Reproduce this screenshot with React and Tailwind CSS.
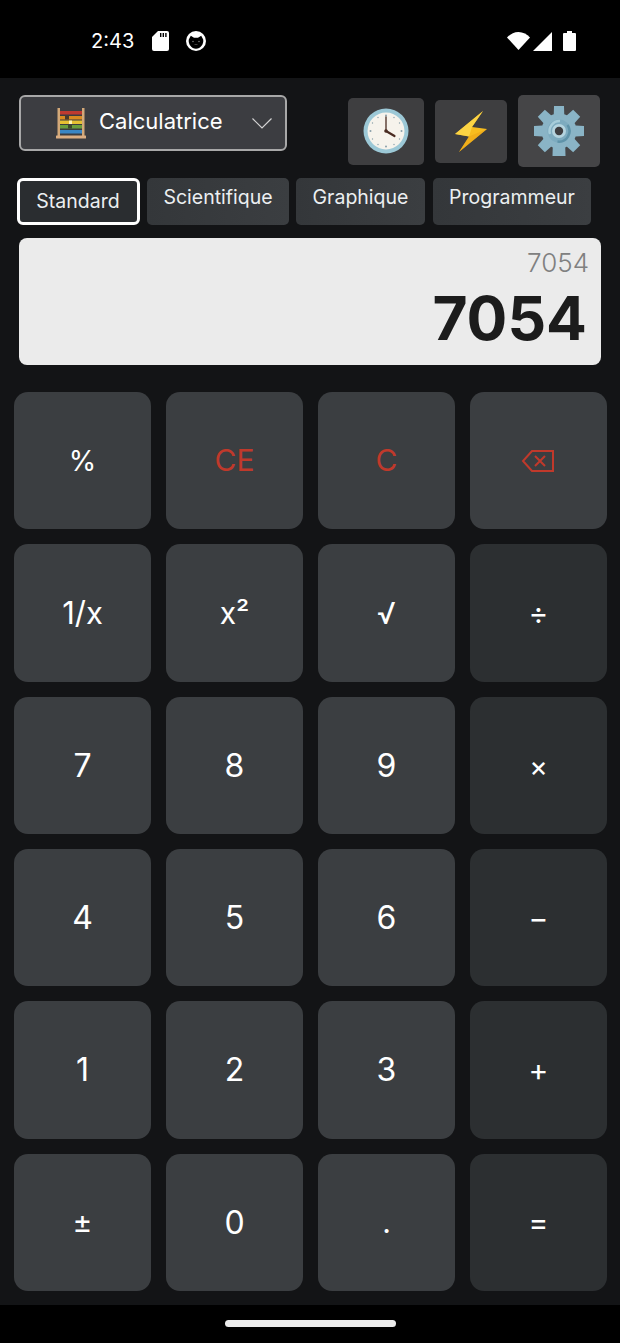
import React from 'react';

const SdIcon = () => (
  <svg width="17" height="20" viewBox="0 0 17 20">
    <path fill="#fff" d="M6 0h9a2 2 0 0 1 2 2v16a2 2 0 0 1-2 2H2a2 2 0 0 1-2-2V6z" />
    <path fill="#000" d="M8 2h1.400v4H8zM10.600 2H12v4h-1.400zM13.200 2h1.400v4h-1.400z" />
  </svg>
);

const CatIcon = () => (
  <svg width="20" height="20" viewBox="0 0 20 20">
    <circle cx="10" cy="10" r="10" fill="#fff" />
    <path fill="#000" d="M2.800 8.500L4.800 4.800 8 6.800h4l3.200-2 2 3.700C18 13 14.500 17.800 10 17.800S2 13 2.800 8.500z" />
    <circle cx="7" cy="10.500" r="0.800" fill="#777" />
    <circle cx="13" cy="10.500" r="0.800" fill="#777" />
    <path d="M8.500 13.500h3" stroke="#666" strokeWidth="0.600" />
  </svg>
);

const WifiIcon = () => (
  <svg width="23" height="18" viewBox="0 0 23 18">
    <path fill="#fff" d="M0 5.500C3 2.200 7 0 11.500 0S20 2.200 23 5.500L11.500 18z" />
  </svg>
);

const SignalIcon = () => (
  <svg width="20" height="19" viewBox="0 0 20 19">
    <path fill="#fff" d="M19 0v19H0z" />
  </svg>
);

const BatteryIcon = () => (
  <svg width="13" height="20" viewBox="0 0 13 20">
    <path fill="#fff" d="M4 0h5v2h3a1 1 0 0 1 1 1v16a1 1 0 0 1-1 1H1a1 1 0 0 1-1-1V3a1 1 0 0 1 1-1h3z" />
  </svg>
);

const AbacusIcon = () => (
  <svg width="30" height="31" viewBox="0 0 30 31">
    <rect x="1.500" y="0" width="2.500" height="28" fill="#d2a878" />
    <rect x="26" y="0" width="2.500" height="28" fill="#d2a878" />
    <rect x="4" y="3" width="22" height="3.500" fill="#bf3a30" />
    <rect x="4" y="8" width="22" height="3.500" fill="#d98a20" />
    <rect x="4" y="12.500" width="22" height="3.500" fill="#e6c032" />
    <rect x="4" y="17" width="22" height="3.500" fill="#6a9e3c" />
    <rect x="4" y="22" width="22" height="3.500" fill="#3a86c4" />
    <rect x="9" y="8" width="4" height="3.500" fill="#4a3a2a" />
    <rect x="13" y="12.500" width="3" height="3.500" fill="#fff3b0" />
    <rect x="12" y="17" width="4" height="3.500" fill="#3d4a2a" />
    <rect x="0" y="27.500" width="30" height="3" rx="0.500" fill="#dcae82" />
  </svg>
);

const ClockIcon = () => (
  <svg width="46" height="46" viewBox="0 0 46 46">
    <circle cx="23" cy="23" r="22.500" fill="#9cc8d6" />
    <circle cx="23" cy="23" r="18.500" fill="#f6f3ec" />
    <g fill="#8aa0aa">
      <circle cx="23" cy="7.500" r="1" />
      <circle cx="23" cy="38.500" r="1" />
      <circle cx="7.500" cy="23" r="1" />
      <circle cx="38.500" cy="23" r="1" />
      <circle cx="31" cy="9.500" r="0.700" />
      <circle cx="36.500" cy="15" r="0.700" />
      <circle cx="36.500" cy="31" r="0.700" />
      <circle cx="31" cy="36.500" r="0.700" />
      <circle cx="15" cy="36.500" r="0.700" />
      <circle cx="9.500" cy="31" r="0.700" />
      <circle cx="9.500" cy="15" r="0.700" />
      <circle cx="15" cy="9.500" r="0.700" />
    </g>
    <path d="M23 23V9" stroke="#4a2c22" strokeWidth="1.300" strokeLinecap="round" />
    <path d="M23 23l8.500 5" stroke="#4a2c22" strokeWidth="2.200" strokeLinecap="round" />
    <circle cx="23" cy="23" r="1.800" fill="#4a2c22" />
  </svg>
);

const BoltIcon = () => (
  <svg width="32" height="41" viewBox="0 0 32 41">
    <path fill="#f7bc1e" d="M28 0L0 23l14 2.500L4 41l28-23-15-2z" />
    <path fill="#fdd94e" d="M28 0L0 23l14 2.500 3-9.500z" opacity="0.800" />
    <path fill="#e9a016" d="M32 18L4 41l10-15.500z" opacity="0.500" />
  </svg>
);

const GearIcon = () => (
  <svg width="50" height="50" viewBox="0 0 50 50">
    <g fill="#8ab4c6">
      <path d="M20 0h10l1.500 50h-13z" />
      <path d="M20 0h10l1.500 25h-13z" transform="rotate(45 25 25)" />
      <path d="M20 0h10l1.500 25h-13z" transform="rotate(90 25 25)" />
      <path d="M20 0h10l1.500 25h-13z" transform="rotate(135 25 25)" />
      <path d="M20 0h10l1.500 25h-13z" transform="rotate(225 25 25)" />
      <path d="M20 0h10l1.500 25h-13z" transform="rotate(270 25 25)" />
      <path d="M20 0h10l1.500 25h-13z" transform="rotate(315 25 25)" />
    </g>
    <circle cx="25" cy="25" r="17.500" fill="#8ab4c6" />
    <circle cx="25" cy="25" r="11.500" fill="#7dabbf" />
    <path d="M33.500 19a10.500 10.500 0 0 1-10 16.500" fill="none" stroke="#5f93a9" strokeWidth="2.500" />
    <path d="M16 28a10 10 0 0 1 10-13" fill="none" stroke="#a7cdda" strokeWidth="2.500" />
    <circle cx="25" cy="25" r="7" fill="#b5d4df" />
    <circle cx="25" cy="25" r="4.200" fill="#3f3f42" />
  </svg>
);

const ChevronIcon = () => (
  <svg width="20" height="11" viewBox="0 0 20 11" fill="none" stroke="#d4d4d4" strokeWidth="1.200">
    <path d="M0.500 0.500L10 10 19.500 0.500" />
  </svg>
);

const BackspaceIcon = () => (
  <svg width="34" height="24" viewBox="0 0 34 24" fill="none" stroke="#c0392b" strokeWidth="2">
    <path d="M32 2v20H11L2 12l9-10z" />
    <path d="M14 7l10 10M24 7L14 17" />
  </svg>
);

const tabs = [
  { label: 'Scientifique', w: 'w-[142px]' },
  { label: 'Graphique', w: 'w-[129px]' },
  { label: 'Programmeur', w: 'w-[158px] ml-px' },
];

const keys = [
  { label: '%', size: 'text-[28px] pb-px' },
  { label: 'CE', size: 'text-[30px] pb-px', red: true },
  { label: 'C', size: 'text-[30px] pb-px', red: true },
  { icon: <BackspaceIcon />, size: 'pr-[2px] pb-px' },
  { label: '1/x', size: 'text-[31px]' },
  { label: 'x²', size: 'text-[30px]' },
  { label: '√', size: 'text-[30px]' },
  { label: '÷', size: 'text-[30px]', op: true },
  { label: '7', size: 'text-[32px]' },
  { label: '8', size: 'text-[32px]' },
  { label: '9', size: 'text-[32px]' },
  { label: '×', size: 'text-[28px]', op: true },
  { label: '4', size: 'text-[32px]' },
  { label: '5', size: 'text-[32px]' },
  { label: '6', size: 'text-[32px]' },
  { label: '−', size: 'text-[30px]', op: true },
  { label: '1', size: 'text-[32px]' },
  { label: '2', size: 'text-[32px]' },
  { label: '3', size: 'text-[32px]' },
  { label: '+', size: 'text-[30px]', op: true },
  { label: '±', size: 'text-[30px]' },
  { label: '0', size: 'text-[32px]' },
  { label: '.', size: 'text-[30px]' },
  { label: '=', size: 'text-[30px]', op: true },
];

export default function App() {
  return (
    <div className="w-[620px] h-[1343px] flex flex-col bg-[#131416] text-white font-['Inter',sans-serif] overflow-hidden">
      {/* Status bar */}
      <div className="h-[78px] shrink-0 bg-black flex items-center pl-[91px] pr-[44px] pt-[4px]">
        <span className="text-[20px] w-[61px]">2:43</span>
        <SdIcon />
        <span className="ml-[17px]"><CatIcon /></span>
        <span className="ml-auto"><WifiIcon /></span>
        <span className="ml-[3px]"><SignalIcon /></span>
        <span className="ml-[10px]"><BatteryIcon /></span>
      </div>

      {/* Header */}
      <div className="flex mt-[17px] ml-[19px] h-[72px] items-center">
        <div className="self-start w-[268px] h-[56px] rounded-[6px] border-2 border-[#a8a8a8] bg-[#3c3d41] flex items-center pl-[35px] pr-[13px]">
          <AbacusIcon />
          <span className="ml-[13px] mb-[3px] text-[22px]">Calculatrice</span>
          <span className="ml-auto"><ChevronIcon /></span>
        </div>
        <button className="ml-[61px] w-[76px] h-[67px] rounded-[5px] bg-[#3e3e40] flex items-center justify-center"><ClockIcon /></button>
        <button className="ml-[11px] w-[72px] h-[63px] rounded-[5px] bg-[#3e3e40] flex items-center justify-center"><BoltIcon /></button>
        <button className="ml-[11px] w-[82px] h-[72px] rounded-[5px] bg-[#454547] flex items-center justify-center"><GearIcon /></button>
      </div>

      {/* Mode tabs */}
      <div className="flex mt-[11px] ml-[17px] gap-[7px] h-[47px]">
        <div className="w-[123px] rounded-[6px] border-[3px] border-white bg-[#2a2d30] flex items-center justify-center pt-px pr-px text-[19.5px] text-[#eceff1]">Standard</div>
        {tabs.map((t) => (
          <div key={t.label} className={`${t.w} rounded-[5px] bg-gradient-to-r from-[#34373a] to-[#3b3e41] flex items-center justify-center pb-[7px] text-[19.5px] text-[#eceff1]`}>{t.label}</div>
        ))}
      </div>

      {/* Display */}
      <div className="mt-[13px] mx-[19px] h-[127px] rounded-[8px] bg-[#ebebeb] flex flex-col items-end pr-[14px] pt-[9px]">
        <span className="mr-[-2px] text-[26px] leading-[32px] font-light text-[#808080]">7054</span>
        <span className="mt-[3px] text-[60.5px] leading-[72px] font-bold text-[#1c1c1c]">7054</span>
      </div>

      {/* Keypad */}
      <div className="mt-[27px] ml-[14px] w-[593px] h-[899px] grid grid-cols-4 grid-rows-6 gap-[15px]">
        {keys.map((k, i) => (
          <button
            key={i}
            className={`rounded-[14px] flex items-center justify-center pt-px ${k.op ? 'bg-[#2c2f31]' : 'bg-[#3b3e41]'} ${k.red ? 'text-[#c0392b]' : 'text-white'} ${k.size || ''}`}
          >
            {k.icon || k.label}
          </button>
        ))}
      </div>

      {/* Nav bar */}
      <div className="mt-auto h-[38px] shrink-0 bg-black flex items-center justify-center pb-[2px]">
        <div className="w-[171px] h-[7px] rounded-full bg-[#ececec]" />
      </div>
    </div>
  );
}
